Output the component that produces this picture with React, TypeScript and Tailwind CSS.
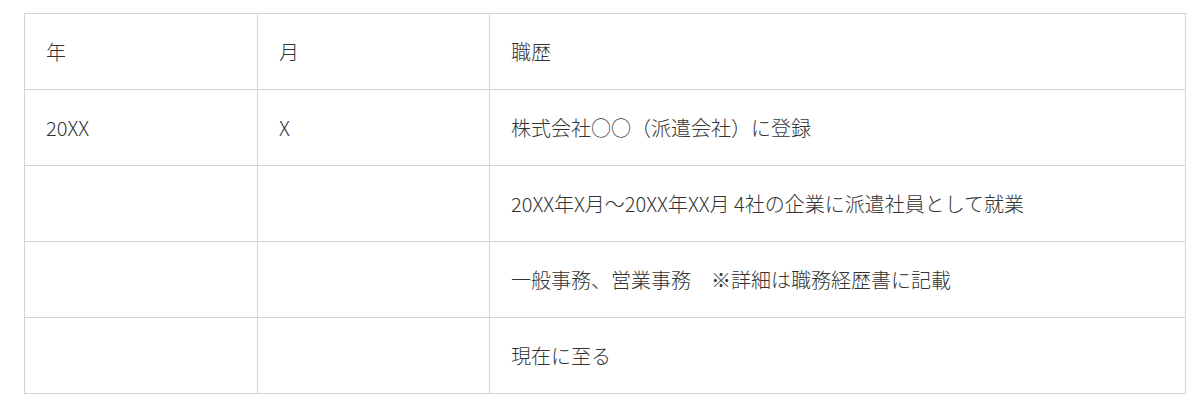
import React from "react";

const rows: [string, string, string][] = [
  ["年", "月", "職歴"],
  ["20XX", "X", "株式会社○○（派遣会社）に登録"],
  ["", "", "20XX年X月～20XX年XX月 4社の企業に派遣社員として就業"],
  ["", "", "一般事務、営業事務　※詳細は職務経歴書に記載"],
  ["", "", "現在に至る"],
];

export default function App() {
  return (
    <div className="bg-white w-[1204px] h-[411px] pt-[13px] pl-[24px]" style={{ fontFamily: '"Noto Sans CJK JP", "Noto Sans", sans-serif' }}>
      <table className="w-[1162px] border-collapse table-fixed text-[#333333] text-[20px] font-light">
        <colgroup>
          <col className="w-[233px]" />
          <col className="w-[232px]" />
          <col />
        </colgroup>
        <tbody>
          {rows.map((r, i) => (
            <tr key={i} className="h-[76px]">
              {r.map((c, j) => (
                <td key={j} className="border border-[#d4d4d4] pl-[21px] py-0 align-middle leading-[1.5]">
                  {c}
                </td>
              ))}
            </tr>
          ))}
        </tbody>
      </table>
    </div>
  );
}
